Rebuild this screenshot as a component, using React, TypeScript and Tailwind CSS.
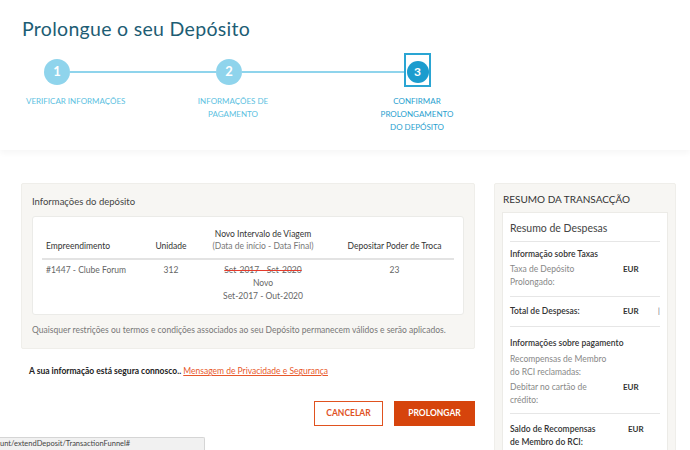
import React from "react";

const font = { fontFamily: "Lato, 'Noto Sans', sans-serif" };

function Circle({ n }: { n: string }) {
  return (
    <div className="w-[26px] h-[26px] mt-[6px] rounded-full bg-[#8fd4ec] text-white flex items-center justify-center text-[13px] font-bold shrink-0">
      {n}
    </div>
  );
}

export default function App() {
  return (
    <div className="w-[690px] h-[450px] overflow-hidden bg-white relative text-[#333]" style={font}>
      {/* Header */}
      <div className="bg-white shadow-[0_3px_6px_rgba(0,0,0,0.04)] pb-[16px]">
        <h1 className="pl-[22px] pt-[15px] text-[19.5px] leading-[28px] text-[#1d5d74] tracking-[0.3px]">
          Prolongue o seu Depósito
        </h1>
        <div className="flex items-start pl-[44px] mt-[10px]">
          <Circle n="1" />
          <div className="w-[146px] h-[2px] mt-[18px] bg-[#8fd4ec]" />
          <Circle n="2" />
          <div className="w-[162px] h-[2px] mt-[18px] bg-[#8fd4ec]" />
          <div className="w-[27px] h-[34px] border-2 border-[#2aa5d3] flex justify-center pt-[6px]">
            <div className="w-[22px] h-[22px] rounded-full bg-[#1c9cce] text-white flex items-center justify-center text-[12px] font-bold">
              3
            </div>
          </div>
        </div>
        <div className="flex items-start mt-[8px] text-[8px] leading-[13px] uppercase text-[#5dbfe1]">
          <div className="w-[110px] ml-[26px] text-left">Verificar Informações</div>
          <div className="w-[100px] ml-[47px] text-center">Informações de<br />Pagamento</div>
          <div className="w-[100px] ml-[84px] text-center text-[#2a9fcf]">Confirmar<br />Prolongamento<br />do Depósito</div>
        </div>
      </div>

      {/* Main */}
      <div className="flex items-start gap-[19px] pl-[21px] pt-[33px]">
        <div className="w-[454px]">
          <div className="bg-[#f7f6f3] border border-[#efeeea] rounded-[2px] px-[10px] pt-[11px] pb-[12px]">
            <div className="text-[9.5px] leading-[14px] text-[#444]">Informações do depósito</div>
            <div className="mt-[7px] bg-white border border-[#ebebe8] rounded-[3px] h-[99px] px-[9px] pt-[11px]">
              <div className="grid grid-cols-[110px_38px_146px_117px] items-end text-[8.5px] leading-[12px] text-[#333] pb-[6px] border-b-2 border-[#e3e3e3]">
                <div className="pl-[4px]">Empreendimento</div>
                <div className="text-center">Unidade</div>
                <div className="text-center">
                  Novo Intervalo de Viagem
                  <br />
                  <span className="text-[#777]">(Data de início - Data Final)</span>
                </div>
                <div className="text-center">Depositar Poder de Troca</div>
              </div>
              <div className="grid grid-cols-[110px_38px_146px_117px] items-start text-[8.5px] leading-[13px] text-[#666] pt-[4px]">
                <div className="pl-[4px]">#1447 - Clube Forum</div>
                <div className="text-center">312</div>
                <div className="text-center">
                  <span className="line-through decoration-[#e53b2c] decoration-1">Set-2017 - Set-2020</span>
                  <br />
                  Novo
                  <br />
                  Set-2017 - Out-2020
                </div>
                <div className="text-center">23</div>
              </div>
            </div>
            <div className="mt-[9px] text-[8.5px] leading-[12px] text-[#777]">
              Quaisquer restrições ou termos e condições associados ao seu Depósito permanecem válidos e serão aplicados.
            </div>
          </div>

          <div className="mt-[16px] pl-[8px] text-[8.5px] leading-[12px]">
            <span className="font-bold text-[#222]">A sua informação está segura connosco.. </span>
            <span className="text-[#e8582a] underline">Mensagem de Privacidade e Segurança</span>
          </div>

          <div className="flex justify-end gap-[11px] mt-[24px]">
            <button className="w-[69px] h-[25px] border border-[#e0521f] bg-white text-[#e0521f] text-[8.5px] font-bold">
              CANCELAR
            </button>
            <button className="w-[81px] h-[25px] bg-[#d6440c] text-white text-[8.5px] font-bold">
              PROLONGAR
            </button>
          </div>
        </div>

        {/* Right summary */}
        <div className="w-[182px] bg-[#f7f6f3] border border-[#efeeea] rounded-[2px] px-[7px] pt-[8px] h-[280px]">
          <div className="text-[10px] leading-[14px] text-[#333] pl-[1px]">RESUMO DA TRANSACÇÃO</div>
          <div className="mt-[6px] bg-white border border-[#ecebe7] px-[7px]">
            <div className="text-[10.5px] leading-[14px] text-[#444] pt-[8px] pb-[6px] border-b border-[#e6e6e6]">
              Resumo de Despesas
            </div>
            <div className="pt-[6px] pb-[7px] border-b border-[#e6e6e6] text-[8.5px] leading-[13px]">
              <div className="text-[#333] font-semibold">Informação sobre Taxas</div>
              <div className="flex mt-[2px]">
                <div className="w-[113px] text-[#888]">Taxa de Depósito<br />Prolongado:</div>
                <div className="font-bold text-[#333] text-[8px]">EUR</div>
              </div>
            </div>
            <div className="flex pt-[8px] pb-[8px] border-b border-[#e6e6e6] text-[8.5px] leading-[13px]">
              <div className="w-[113px] text-[#333] font-semibold">Total de Despesas:</div>
              <div className="font-bold text-[#333] text-[8px] w-[35px]">EUR</div>
              <div className="text-[#555] text-[7px]">|</div>
            </div>
            <div className="pt-[10px] pb-[6px] border-b border-[#e6e6e6] text-[8.5px] leading-[13px]">
              <div className="text-[#333] font-semibold">Informações sobre pagamento</div>
              <div className="text-[#888] mt-[3px]">Recompensas de Membro<br />do RCI reclamadas:</div>
              <div className="flex mt-[2px]">
                <div className="w-[113px] text-[#888]">Debitar no cartão de<br />crédito:</div>
                <div className="font-bold text-[#333] text-[8px]">EUR</div>
              </div>
            </div>
            <div className="flex pt-[9px] pb-[10px] text-[8.5px] leading-[13px]">
              <div className="w-[118px] text-[#333] font-semibold">Saldo de Recompensas<br />de Membro do RCI:</div>
              <div className="font-bold text-[#333] text-[8px]">EUR</div>
            </div>
          </div>
        </div>
      </div>

      {/* browser status bar */}
      <div className="absolute left-0 bottom-0 w-[205px] h-[13px] bg-[#f1f1f1] border-t border-r border-[#d5d5d5] rounded-tr-[2px] text-[7.5px] leading-[12px] text-[#444] overflow-hidden whitespace-nowrap">
        unt/extendDeposit/TransactionFunnel#
      </div>
    </div>
  );
}
